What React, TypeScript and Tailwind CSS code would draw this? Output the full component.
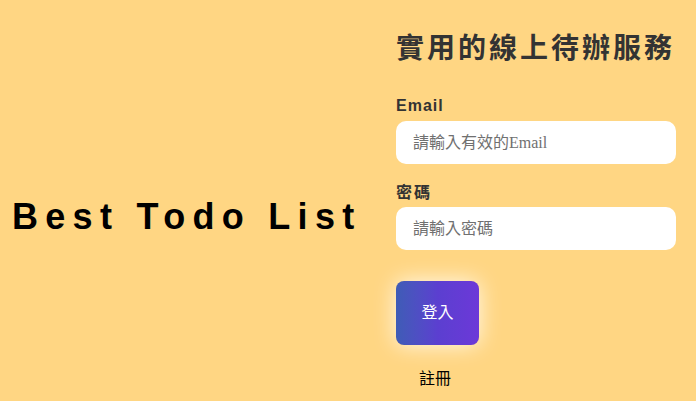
import React from "react";

export default function App() {
  return (
    <div
      className="flex h-[401px] w-[696px] items-center bg-[#ffd683] overflow-hidden"
      style={{ fontFamily: '"Liberation Sans", "Noto Sans CJK TC", sans-serif' }}
    >
      <div className="pl-[12px] w-[396px] shrink-0 pt-[33px]">
        <h1 className="text-[36px] leading-none font-bold tracking-[7.3px] text-black whitespace-nowrap">
          Best Todo List
        </h1>
      </div>
      <div className="w-[280px] self-start flex flex-col pt-[30px]">
        <h2
          className="text-[28px] leading-[32px] font-bold tracking-[3px] text-[#333] whitespace-nowrap"
          style={{ fontFamily: '"Noto Sans CJK TC", sans-serif' }}
        >
          實用的線上待辦服務
        </h2>
        <label className="mt-[32px] text-[16px] leading-[24px] font-bold tracking-[1px] text-[#333]">
          Email
        </label>
        <input
          type="email"
          placeholder="請輸入有效的Email"
          className="mt-[3px] h-[43px] w-full rounded-[10px] bg-white pl-[17px] text-[16px] outline-none placeholder:text-[#707070]"
          style={{ fontFamily: '"Liberation Serif", "Noto Sans CJK TC", serif' }}
        />
        <label className="mt-[17px] text-[16px] leading-[24px] font-bold tracking-[2px] text-[#333]">
          密碼
        </label>
        <input
          type="password"
          placeholder="請輸入密碼"
          className="mt-[2px] h-[43px] w-full rounded-[10px] bg-white pl-[17px] text-[16px] outline-none placeholder:text-[#707070]"
          style={{ fontFamily: '"Liberation Serif", "Noto Sans CJK TC", serif' }}
        />
        <button className="mt-[31px] h-[64px] w-[83px] rounded-[8px] bg-gradient-to-r from-[#3e5cb6] via-[#5b3fd0] to-[#6c38d8] text-[16px] text-white shadow-[0_0_22px_rgba(255,255,255,0.85)]">
          登入
        </button>
        <a className="mt-[22px] ml-[23px] text-[16px] leading-[24px] text-black">註冊</a>
      </div>
    </div>
  );
}
